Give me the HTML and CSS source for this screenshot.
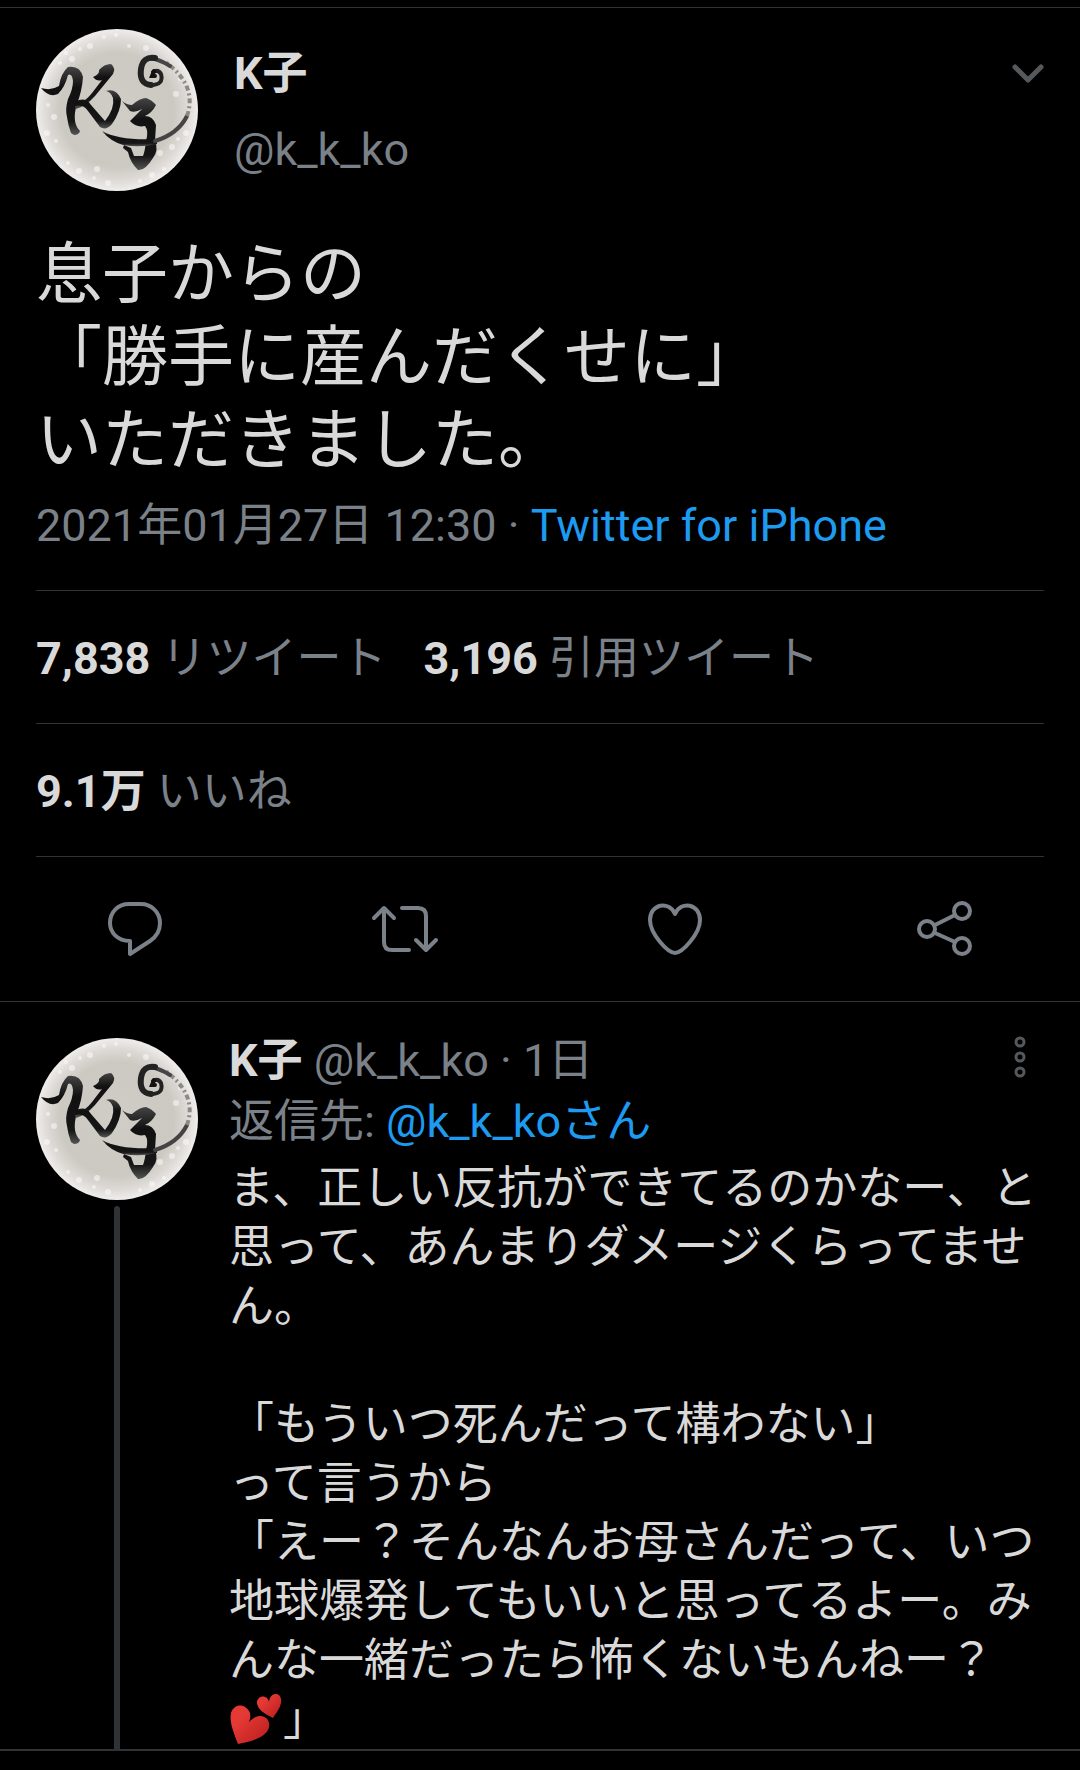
FILE: index.html
```html
<!DOCTYPE html>
<html lang="ja">
<head>
    <meta charset="UTF-8">
    <meta name="viewport" content="width=device-width, initial-scale=1.0">
    <title>K子さんのツイート</title>
    <link rel="stylesheet" href="styles.css">
</head>
<body>
    <!-- アバター（共通） -->
    <svg class="defs" aria-hidden="true">
        <defs>
            <radialGradient id="paper">
                <stop offset="0" stop-color="#cfcdc6"/>
                <stop offset="0.7" stop-color="#cbc9c1"/>
                <stop offset="0.88" stop-color="#dedbd8"/>
                <stop offset="1" stop-color="#f0eeec"/>
            </radialGradient>
            <linearGradient id="ink" x1="0" y1="0" x2="0" y2="1">
                <stop offset="0" stop-color="#444"/>
                <stop offset="0.3" stop-color="#111"/>
                <stop offset="0.8" stop-color="#161616"/>
                <stop offset="1" stop-color="#555"/>
            </linearGradient>
            <linearGradient id="heart" x1="0" y1="0" x2="1" y2="1">
                <stop offset="0.3" stop-color="#e53935"/>
                <stop offset="1" stop-color="#b71c1c"/>
            </linearGradient>
        </defs>
        <symbol id="avatar" viewBox="0 0 162 162">
            <circle cx="81" cy="81" r="81" fill="url(#paper)"/>
            <g fill="#fff" opacity="0.5">
                <circle cx="54" cy="17" r="3"/><circle cx="36" cy="30" r="3"/><circle cx="24" cy="34" r="2"/>
                <circle cx="44" cy="20" r="2"/><circle cx="80" cy="6" r="2"/><circle cx="30" cy="24" r="2"/>
                <circle cx="93" cy="17" r="2"/><circle cx="110" cy="19" r="3"/><circle cx="68" cy="8" r="2"/>
                <circle cx="12" cy="76" r="2"/><circle cx="18" cy="88" r="3"/><circle cx="11" cy="104" r="3"/>
                <circle cx="20" cy="112" r="2"/><circle cx="32" cy="134" r="2"/><circle cx="43" cy="142" r="3"/>
                <circle cx="61" cy="140" r="3"/><circle cx="58" cy="149" r="2"/><circle cx="72" cy="154" r="3"/>
                <circle cx="124" cy="124" r="3"/><circle cx="136" cy="118" r="3"/><circle cx="128" cy="140" r="2"/>
                <circle cx="140" cy="65" r="3"/><circle cx="144" cy="50" r="2"/><circle cx="150" cy="104" r="3"/>
                <circle cx="116" cy="146" r="3"/><circle cx="104" cy="152" r="2"/><circle cx="142" cy="110" r="2"/>
            </g>
            <g fill="url(#ink)">
                <path d="M5 59Q15 62 23 57Q25 44 32 38Q44 36 47 48Q46 62 41 75Q38 84 39 92Q40 98 44 102Q43 106 38 106L35 104Q32 96 31 88Q29 80 32 70Q37 60 37 52Q36 44 32 46Q29 58 22 65Q13 69 5 59Z"/>
                <path d="M57 48Q64 45 63 41Q68 35 75 35Q80 39 77 45L59 67Q50 77 40 80L39 77Q50 72 56 64L66 51Q61 53 57 48Z"/>
                <path d="M39 73Q49 67 55 76L69 92Q79 79 77 69Q75 63 70 62Q80 59 85 70Q85 82 76 95Q70 102 64 98L52 82Q47 75 39 77Z"/>
                <path d="M86 72Q91 76 96 76Q104 69 110 69Q116 71 120 76Q116 84 109 87Q117 87 120 96L119 112Q123 121 117 129Q109 142 102 141Q94 133 92 123L87 119L88 116L95 119L98 127H107Q109 122 110 112Q113 102 109 97Q100 99 94 92L106 80Q99 84 94 82Z"/>
                <path d="M66 102Q84 112 121 110V115Q104 119 87 116Q74 112 66 102Z"/>
            </g>
            <g fill="none" stroke-linecap="round">
                <path d="M119 112Q142 105 151 87" stroke="#444" stroke-width="4"/>
                <path d="M151 87Q162 56 128 32" stroke="#8b8b84" stroke-width="4" stroke-dasharray="5 3 2 3" stroke-linecap="butt"/>
                <path d="M134 37Q123 30 113 29" stroke="#444" stroke-width="4"/>
                <path d="M119 29Q107 27 105 40Q103 55 115 56" stroke="#222" stroke-width="6"/>
                <path d="M115 56Q128 56 125 45Q122 40 117 43" stroke="#222" stroke-width="4"/>
                <path d="M118 42L116 47L119 47" stroke="#111" stroke-width="4"/>
            </g>
        </symbol>
    </svg>

    <main class="thread">
        <article class="tweet">
            <header class="tweet-header">
                <svg class="avatar" role="img" aria-label="K子"><use href="#avatar"/></svg>
                <div class="author">
                    <span class="name">K子</span>
                    <span class="handle">@k_k_ko</span>
                </div>
                <button class="icon-button" aria-label="その他">
                    <svg class="chevron" viewBox="0 0 32 20"><path d="M3 3L16 16L29 3"/></svg>
                </button>
            </header>
            <p class="tweet-text">息子からの<br>「勝手に産んだくせに」<br>いただきました。</p>
            <p class="meta">2021年01月27日 12:30 · <a href="#">Twitter for iPhone</a></p>
            <div class="stats">
                <span><b>7,838</b> リツイート</span>
                <span><b>3,196</b> 引用ツイート</span>
            </div>
            <div class="stats likes">
                <span><b>9.1万</b> いいね</span>
            </div>
        </article>

        <div class="actions">
            <button class="icon-button" aria-label="返信">
                <svg class="icon" viewBox="0 0 68 60"><path d="M28 5H40C50 5 59 13 59 24C59 32 55 38 49 42L29 55V42C16 42 9 33 9 24C9 13 17 5 28 5Z"/></svg>
            </button>
            <button class="icon-button" aria-label="リツイート">
                <svg class="icon" viewBox="0 0 68 60"><path d="M3 19L13 9L23 19M13 10V43Q13 51 21 51H38M31 9H47Q55 9 55 17V50M45 41L55 51L65 41"/></svg>
            </button>
            <button class="icon-button" aria-label="いいね">
                <svg class="icon" viewBox="0 0 68 60"><path d="M34 15C28 1 9 5 9 21C9 35 27 54 34 54C41 54 59 35 59 21C59 5 40 1 34 15Z"/></svg>
            </button>
            <button class="icon-button" aria-label="共有">
                <svg class="icon" viewBox="0 0 68 60"><circle cx="16" cy="30" r="8"/><circle cx="51" cy="12" r="8"/><circle cx="51" cy="47" r="8"/><path d="M24 26L44 16M24 34L44 43"/></svg>
            </button>
        </div>

        <article class="reply">
            <div class="reply-side">
                <svg class="avatar" role="img" aria-label="K子"><use href="#avatar"/></svg>
                <div class="thread-line"></div>
            </div>
            <div class="reply-body">
                <div class="reply-header">
                    <span class="reply-author"><b>K子</b> @k_k_ko · 1日</span>
                    <button class="icon-button" aria-label="メニュー">
                        <svg class="dots" viewBox="0 0 12 44"><circle cx="6" cy="7" r="4"/><circle cx="6" cy="22" r="4"/><circle cx="6" cy="37" r="4"/></svg>
                    </button>
                </div>
                <p class="reply-to">返信先: <a href="#">@k_k_koさん</a></p>
                <p class="reply-text">ま、正しい反抗ができてるのかなー、と思って、あんまりダメージくらってません。<br><br>「もういつ死んだって構わない」<br>って言うから<br>「えー？そんなんお母さんだって、いつ地球爆発してもいいと思ってるよー。みんな一緒だったら怖くないもんねー？<br><svg class="emoji" viewBox="0 0 54 52" role="img" aria-label="💕"><path d="M9 51C5 40 0 29 2 20C5 10 17 10 21 20Q22 25 20 29C30 18 42 24 40 34C38 44 24 48 9 51Z"/><path d="M44 25C36 21 27 16 28 8C31 1 39 3 40 9C41 -1 51 -1 52 6C53 13 48 19 44 25Z"/></svg>」</p>
            </div>
        </article>
    </main>
</body>
</html>
```
FILE: styles.css
```css
* {
    box-sizing: border-box;
}
body {
    margin: 0;
    padding-top: 7px;
    background: #000;
    color: #d9d9d9;
    font-family: Roboto, "Noto Sans CJK JP", sans-serif;
    font-size: 45px;
    line-height: 60px;
}
p {
    margin: 0;
}
a {
    color: #1d9bf0;
    text-decoration: none;
}
.defs {
    position: absolute;
    width: 0;
    height: 0;
}
.thread {
    border-top: 1px solid #2f3336;
    border-bottom: 2px solid #2f3336;
}
.tweet {
    padding: 21px 36px 0;
}
.tweet-header {
    display: flex;
    align-items: flex-start;
}
.avatar {
    display: block;
    flex: none;
    width: 162px;
    height: 162px;
}
.author {
    display: flex;
    flex: 1;
    flex-direction: column;
    gap: 16px;
    padding: 15px 0 0 36px;
}
.name {
    font-weight: bold;
}
.handle {
    color: #7b8188;
}
.icon-button {
    padding: 0;
    border: 0;
    background: none;
    cursor: pointer;
}
.icon-button svg {
    display: block;
    fill: none;
    stroke: #7b8188;
    stroke-width: 4;
    stroke-linecap: round;
    stroke-linejoin: round;
}
.icon-button .chevron {
    width: 32px;
    height: 20px;
    margin-top: 35px;
    stroke: #56595c;
    stroke-width: 5;
}
.tweet-text {
    margin-top: 42px;
    font-size: 66px;
    line-height: 83px;
}
.meta {
    margin: 14px 0 34px;
    color: #7b8188;
}
.stats {
    display: flex;
    gap: 37px;
    padding: 38px 0 34px;
    border-top: 1px solid #2f3336;
    color: #7b8188;
}
.likes {
    border-bottom: 1px solid #2f3336;
}
.stats b {
    color: #d9d9d9;
}
.actions {
    display: grid;
    grid-template-columns: repeat(4, 1fr);
    justify-items: center;
    padding: 42px 0;
}
.icon {
    width: 68px;
    height: 60px;
}
.reply {
    display: flex;
    gap: 31px;
    padding: 36px 36px 0;
    border-top: 1px solid #2f3336;
}
.reply-side {
    display: flex;
    flex: none;
    flex-direction: column;
    align-items: center;
    gap: 6px;
}
.thread-line {
    flex: 1;
    width: 6px;
    border-radius: 3px 3px 0 0;
    background: #2f3336;
}
.reply-body {
    flex: 1;
}
.reply-header {
    display: flex;
    align-items: flex-start;
    justify-content: space-between;
}
.reply-author,
.reply-to {
    color: #7b8188;
    line-height: 46px;
}
.reply-to {
    margin: 15px 0 14px;
}
.reply-author b {
    color: #d9d9d9;
}
.icon-button .dots {
    width: 12px;
    height: 44px;
    margin-right: 18px;
    margin-top: -3px;
    stroke: #56595c;
    stroke-width: 3;
}
.reply-text {
    line-height: 59px;
}
.emoji {
    display: inline-block;
    width: 54px;
    height: 52px;
    vertical-align: -10px;
    fill: url(#heart);
}
```
